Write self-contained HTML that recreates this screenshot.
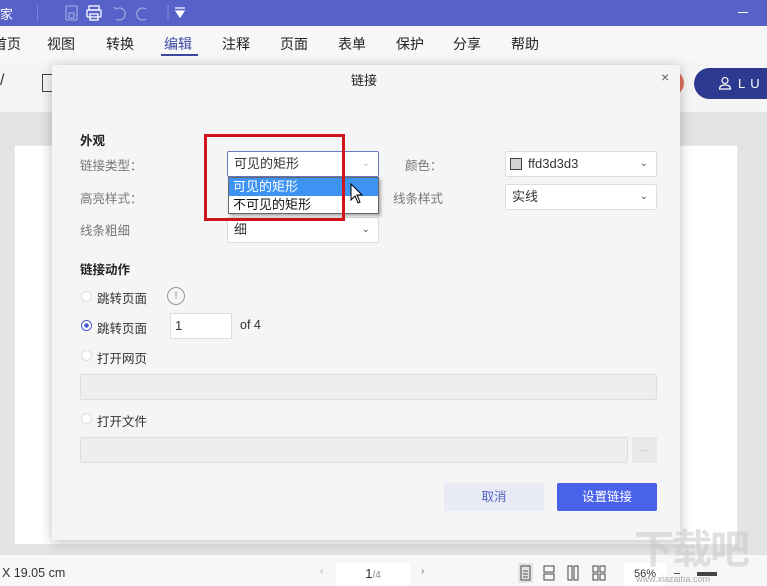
<!DOCTYPE html>
<html><head><meta charset="utf-8"><style>
*{box-sizing:border-box;margin:0;padding:0}
html,body{width:767px;height:586px;overflow:hidden}
body{position:relative;background:#f3f3f3;font-family:"Liberation Sans","Noto Sans CJK SC",sans-serif;font-size:13px;color:#333}
.a{position:absolute;white-space:nowrap}
.sel{position:absolute;background:#fff;border:1px solid #ddd;border-radius:2px;height:26px;padding-left:6px;line-height:24px;font-size:13px;color:#333}
.sel .ar{position:absolute;right:8px;top:0;font-size:10px;color:#555}
.lbl{position:absolute;color:#777;font-size:12.5px;white-space:nowrap}
.radio{position:absolute;width:11px;height:11px;border-radius:50%;border:1px solid #ddd;background:#fff}
</style></head><body>
<div class="a" style="left:0;top:0;width:767px;height:26px;background:#5662c8"></div>
<div class="a" style="left:0;top:4px;color:#fff;font-size:13px">家</div>
<div class="a" style="left:37px;top:5px;width:1px;height:16px;background:#7b85d6"></div>
<svg class="a" style="left:62px;top:3px" width="130" height="20" viewBox="0 0 130 20" fill="none" stroke="#9aa3e0" stroke-width="1.3">
<rect x="4" y="3" width="11" height="14" rx="1"/><rect x="7" y="10" width="5" height="5"/>
<g stroke="#fff"><rect x="27" y="3" width="10" height="4"/><rect x="25" y="7" width="14" height="7" rx="1"/><rect x="28" y="11" width="8" height="6"/></g>
<path d="M54 6 A6 6 0 1 1 54 16 M54 6 L52 4"/><path d="M84 6 A6 6 0 1 0 84 16"/>
<line x1="106" y1="2" x2="106" y2="18" stroke="#7b85d6"/>
<path d="M113 5 h10 M114 8 h8 l-4 6 z" stroke="#fff" fill="#fff"/></svg>
<div class="a" style="left:738px;top:12px;width:10px;height:1px;background:#fff"></div>
<div class="a" style="left:0;top:26px;width:767px;height:34px;background:#f7f7f7"></div>
<div class="a" style="top:34px;left:0;width:600px;height:20px;font-size:14px;color:#222">
<span class="a" style="left:-7px">首页</span><span class="a" style="left:47px">视图</span><span class="a" style="left:106px">转换</span><span class="a" style="left:164px;color:#3d4aa5">编辑</span><span class="a" style="left:222px">注释</span><span class="a" style="left:280px">页面</span><span class="a" style="left:338px">表单</span><span class="a" style="left:396px">保护</span><span class="a" style="left:453px">分享</span><span class="a" style="left:511px">帮助</span></div>
<div class="a" style="left:161px;top:54px;width:37px;height:2px;background:#3d4aa5"></div>
<div class="a" style="left:0;top:60px;width:767px;height:52px;background:#f5f5f5"></div>
<div class="a" style="left:0;top:112px;width:767px;height:443px;background:#e3e3e3"></div>
<div class="a" style="left:14px;top:145px;width:724px;height:400px;background:#fff;border:1px solid #e8e8e8"></div>
<div class="a" style="left:650px;top:70px;width:34px;height:26px;border-radius:13px;background:#e0735e"></div>
<div class="a" style="left:694px;top:68px;width:90px;height:31px;border-radius:16px;background:#2d3a8f;color:#fff;font-size:13px;line-height:31px;padding-left:44px;letter-spacing:5px">LU</div>
<svg class="a" style="left:718px;top:76px" width="14" height="14" fill="none" stroke="#fff" stroke-width="1.2"><circle cx="7" cy="4.5" r="3"/><path d="M1.5 13 q0-4 5.5-4 q5.5 0 5.5 4z"/></svg>
<div class="a" style="left:0;top:72px;font-size:16px">/</div>
<div class="a" style="left:42px;top:74px;width:12px;height:18px;border:1px solid #444"></div>
<!-- dialog -->
<div class="a" style="left:52px;top:65px;width:628px;height:475px;background:#f5f5f5;box-shadow:0 2px 12px rgba(0,0,0,.25);border-radius:2px"></div>
<div class="a" style="left:351px;top:70px;font-size:13px;color:#222">链接</div>
<div class="a" style="left:661px;top:69px;font-size:14px;color:#666">×</div>
<div class="a" style="left:80px;top:130px;font-weight:bold;font-size:12.5px;color:#222">外观</div>
<div class="lbl" style="left:80px;top:155px">链接类型：</div>
<div class="lbl" style="left:80px;top:188px">高亮样式：</div>
<div class="lbl" style="left:80px;top:220px">线条粗细</div>
<div class="lbl" style="left:405px;top:155px">颜色：</div>
<div class="lbl" style="left:393px;top:188px">线条样式</div>
<div class="sel" style="left:227px;top:151px;width:152px;border-color:#6a78c0">可见的矩形<span class="ar" style="color:#bbb">⌄</span></div>
<div class="sel" style="left:227px;top:217px;width:152px">细<span class="ar">⌄</span></div>
<div class="sel" style="left:505px;top:151px;width:152px;padding-left:22px">ffd3d3d3<span class="ar">⌄</span></div>
<div class="a" style="left:510px;top:158px;width:12px;height:12px;background:#d3d3d3;border:1px solid #444"></div>
<div class="sel" style="left:505px;top:184px;width:152px">实线<span class="ar">⌄</span></div>
<div class="a" style="left:228px;top:177px;width:151px;height:37px;background:#fff;border:1px solid #666;box-shadow:2px 2px 3px rgba(0,0,0,.3)"></div>
<div class="a" style="left:229px;top:178px;width:149px;height:18px;background:#3c93f2"></div>
<div class="a" style="left:233px;top:178px;color:#fff;font-size:13px;line-height:18px">可见的矩形</div>
<div class="a" style="left:233px;top:196px;color:#111;font-size:13px;line-height:18px">不可见的矩形</div>
<svg class="a" style="left:350px;top:183px" width="14" height="22"><path d="M1 1 L1 17 L5 13 L8 20 L10 19 L7 12 L12 12 Z" fill="#fff" stroke="#000"/></svg>
<div class="a" style="left:204px;top:134px;width:141px;height:87px;border:3px solid #d0141c"></div>
<div class="a" style="left:80px;top:259px;font-weight:bold;font-size:12.5px;color:#222">链接动作</div>
<div class="radio" style="left:81px;top:291px"></div>
<div class="a" style="left:97px;top:288px;font-size:12.5px">跳转页面</div>
<div class="a" style="left:167px;top:287px;width:18px;height:18px;border:1px solid #999;border-radius:50%;font-size:11px;text-align:center;line-height:16px;color:#888">!</div>
<div class="radio" style="left:81px;top:320px;border-color:#4a5bd0;background:radial-gradient(#4a5bd0 2px,#fff 2.5px)"></div>
<div class="a" style="left:97px;top:318px;font-size:12.5px">跳转页面</div>
<div class="a" style="left:170px;top:313px;width:62px;height:26px;background:#fff;border:1px solid #ddd;padding-left:4px;line-height:24px">1</div>
<div class="a" style="left:240px;top:318px;font-size:12.5px">of 4</div>
<div class="radio" style="left:81px;top:350px"></div>
<div class="a" style="left:97px;top:348px;font-size:12.5px">打开网页</div>
<div class="a" style="left:80px;top:374px;width:577px;height:26px;background:#eee;border:1px solid #ddd;border-radius:2px"></div>
<div class="radio" style="left:81px;top:413px"></div>
<div class="a" style="left:97px;top:411px;font-size:12.5px">打开文件</div>
<div class="a" style="left:80px;top:437px;width:548px;height:26px;background:#eee;border:1px solid #ddd;border-radius:2px"></div>
<div class="a" style="left:632px;top:437px;width:25px;height:26px;background:#e8e8e8;color:#aaa;font-size:10px;text-align:center;line-height:24px">...</div>
<div class="a" style="left:444px;top:483px;width:100px;height:28px;background:#e8ebf5;color:#5563c0;text-align:center;line-height:28px;font-size:12.5px">取消</div>
<div class="a" style="left:557px;top:483px;width:100px;height:28px;background:#4a62ea;color:#fff;text-align:center;line-height:28px;font-size:12.5px;border-radius:2px">设置链接</div>
<!-- status -->
<div class="a" style="left:0;top:555px;width:767px;height:31px;background:#f7f7f7"></div>
<div class="a" style="left:2px;top:566px;font-size:12.5px;color:#333">X 19.05 cm</div>
<div class="a" style="left:320px;top:566px;font-size:10px;color:#aaa">‹</div>
<div class="a" style="left:336px;top:563px;width:74px;height:22px;background:#fff;text-align:center;line-height:22px;font-size:13px">1<span style="font-size:10px;color:#888">/4</span></div>
<div class="a" style="left:421px;top:566px;font-size:10px;color:#666">›</div>
<svg class="a" style="left:518px;top:563px" width="92" height="20" fill="none" stroke="#555" stroke-width="1.1">
<rect x="0" y="0" width="15" height="20" fill="#e4e4e4" stroke="none"/><rect x="3" y="3" width="9" height="14"/><path d="M5 8h5M5 11h5M5 14h5"/>
<rect x="26" y="3" width="10" height="6"/><rect x="26" y="11" width="10" height="6"/>
<rect x="50" y="3" width="4" height="14"/><rect x="56" y="3" width="4" height="14"/>
<rect x="75" y="3" width="5" height="6"/><rect x="82" y="3" width="5" height="6"/><rect x="75" y="11" width="5" height="6"/><rect x="82" y="11" width="5" height="6"/></svg>
<div class="a" style="left:624px;top:563px;width:42px;height:22px;background:#fff;font-size:11px;line-height:22px;text-align:center">56%</div>
<div class="a" style="left:674px;top:573px;width:6px;height:1px;background:#555"></div>
<div class="a" style="left:697px;top:572px;width:20px;height:4px;background:#444"></div>
<div class="a" style="left:634px;top:528px;font-size:40px;line-height:44px;color:rgba(200,200,200,.55);font-weight:bold;letter-spacing:-2px">下载吧</div>
<div class="a" style="left:636px;top:574px;font-size:9px;color:#aaa">www.xiazaiba.com</div>
</body></html>
